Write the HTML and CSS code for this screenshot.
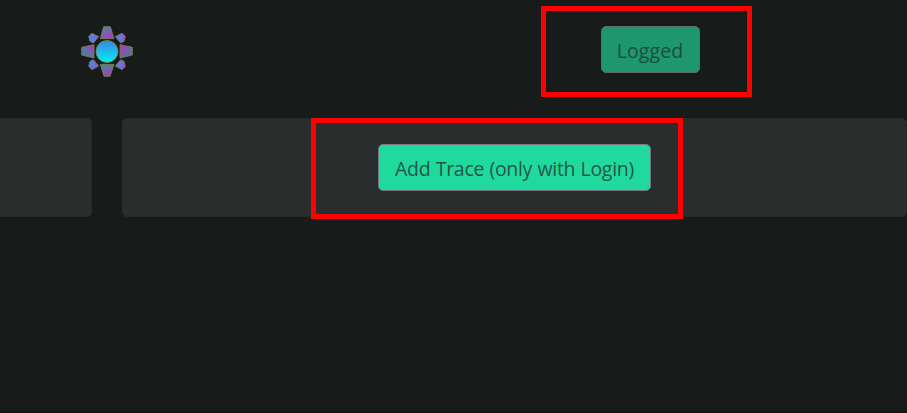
FILE: index.html
```html
<!DOCTYPE html>
<html lang="en">
<head>
<meta charset="utf-8">
<title>Trace</title>
<link rel="stylesheet" href="styles.css">
</head>
<body>
<header class="header">
  <svg class="logo" viewBox="0 0 198 192" aria-hidden="true">
    <defs>
      <linearGradient id="disc" x1="0" y1="0" x2="0" y2="1"><stop offset="0" stop-color="#3588e2"/><stop offset="1" stop-color="#05edf5"/></linearGradient>
      <linearGradient id="ray" x1="0" y1="0" x2=".6" y2="1"><stop offset="0" stop-color="#428b9b"/><stop offset=".5" stop-color="#6d6aad"/><stop offset="1" stop-color="#b236bd"/></linearGradient>
      <linearGradient id="side" x1="0" y1="1" x2="1" y2="0"><stop offset="0" stop-color="#3c8493"/><stop offset=".5" stop-color="#666fa5"/><stop offset="1" stop-color="#c02dc2"/></linearGradient>
      <linearGradient id="sideRight" x1="0" y1="0" x2="1" y2="1"><stop offset="0" stop-color="#c52bc5"/><stop offset=".5" stop-color="#765fa9"/><stop offset="1" stop-color="#3c8493"/></linearGradient>
      <linearGradient id="gem"><stop offset="0" stop-color="#398bea"/><stop offset=".5" stop-color="#6873e1"/><stop offset="1" stop-color="#a64dcc"/></linearGradient>
    </defs>
    <g stroke="#75844a" stroke-width="2.6" stroke-linejoin="round">
      <path fill="url(#ray)" d="M89 20h20l11 36H79z"/>
      <path fill="url(#ray)" d="M79 133h41l-12 36H90z"/>
      <path fill="url(#side)" d="M23 82l37-8v40l-37-9z"/>
      <path fill="url(#sideRight)" d="M138 74l37 8v23l-37 9z"/>
      <path fill="url(#gem)" d="M44 49l10-9 20 10-16 19-10-5z"/>
      <path fill="url(#gem)" d="M154 49l-10-9-20 10 16 19 10-5z"/>
      <path fill="url(#gem)" d="M44 139l10 10 20-11-16-19-10 5z"/>
      <path fill="url(#gem)" d="M154 139l-10 10-20-11 16-19 10 5z"/>
      <circle cx="99" cy="94.5" r="33" fill="url(#disc)"/>
    </g>
  </svg>
  <div class="frame frame-login"><button class="button logged" disabled>Logged</button></div>
</header>
<main class="panels">
  <section class="panel side-panel"></section>
  <section class="panel main-panel">
    <div class="frame frame-trace"><button class="button add">Add Trace (only with Login)</button></div>
  </section>
</main>
</body>
</html>
```
FILE: styles.css
```css
* { box-sizing: border-box; }
body {
  margin: 0;
  height: 413px;
  overflow: hidden;
  background: #171b19;
  border-bottom: 1px solid #170e12;
  font-family: "Open Sans", "Noto Sans", sans-serif;
}
.header {
  display: flex;
  align-items: flex-start;
  height: 118px;
  padding: 6px 155px 0 74px;
}
.logo { width: 66px; height: 64px; margin-top: 14px; }
.frame {
  display: flex;
  align-items: center;
  justify-content: center;
  border: 5px solid #f00;
}
.frame-login {
  width: 211px;
  height: 91px;
  margin-left: auto;
  padding: 0 0 4px 7px;
}
.button {
  height: 47px;
  padding: 2px 0 0;
  border: 1px solid #626969;
  border-radius: 5px;
  font: 400 19.5px/43px "Open Sans", "Noto Sans", sans-serif;
  white-space: nowrap;
}
.logged { width: 99px; background: #1e966e; color: #1b4f3e; letter-spacing: .1px; }
.add {
  width: 273px;
  background: #20da9d;
  color: #205849;
  border-color: #737882;
  letter-spacing: -.3px;
  word-spacing: .6px;
}
.panels { display: flex; gap: 30px; }
.panel {
  height: 99px;
  background: #292d2b;
  border: 1px solid #262a29;
  border-radius: 5px;
}
.side-panel { width: 92px; border-left: 0; border-radius: 0 5px 5px 0; }
.main-panel { flex: 1; padding-left: 188px; }
.frame-trace {
  width: 372px;
  height: 101px;
  margin-top: -1px;
  padding: 0 0 3px 35px;
}
```
